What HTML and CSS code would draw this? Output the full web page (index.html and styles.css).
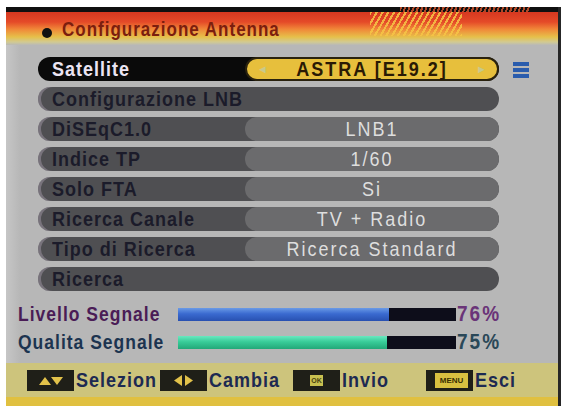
FILE: index.html
```html
<!DOCTYPE html>
<html lang="it">
<head>
<meta charset="utf-8">
<title>Configurazione Antenna</title>
<link rel="stylesheet" href="styles.css">
</head>
<body>
<div class="screen">
  <div class="header">
    <span class="bullet"></span><span class="title">Configurazione Antenna</span>
    <div class="hatch"></div>
    <div class="dash"></div>
  </div>

  <div class="menu">
    <div class="rows">
      <div class="row sel"><span class="label">Satellite</span><span class="value"><span class="arr">&#9668;</span><span class="t">ASTRA [E19.2]</span><span class="arr">&#9658;</span></span></div>
      <div class="row"><span class="label">Configurazione LNB</span></div>
      <div class="row"><span class="label">DiSEqC1.0</span><span class="value"><span class="t">LNB1</span></span></div>
      <div class="row"><span class="label">Indice TP</span><span class="value"><span class="t">1/60</span></span></div>
      <div class="row"><span class="label">Solo FTA</span><span class="value"><span class="t">Si</span></span></div>
      <div class="row"><span class="label">Ricerca Canale</span><span class="value"><span class="t">TV + Radio</span></span></div>
      <div class="row"><span class="label">Tipo di Ricerca</span><span class="value"><span class="t">Ricerca Standard</span></span></div>
      <div class="row"><span class="label">Ricerca</span></div>
    </div>
    <div class="list-icon">
      <svg width="16" height="16" viewBox="0 0 16 16"><rect x="0" y="0" width="16" height="4" fill="#2a5cad"/><rect x="0" y="6" width="16" height="4" fill="#2a5cad"/><rect x="0" y="12" width="16" height="4" fill="#2a5cad"/></svg>
    </div>
  </div>

  <div class="signals">
    <div class="sig">
      <span class="sig-label lv">Livello Segnale</span>
      <div class="bar"><div class="fill blue" style="width:76%"></div></div>
      <span class="pct lvp">76%</span>
    </div>
    <div class="sig">
      <span class="sig-label ql">Qualita Segnale</span>
      <div class="bar"><div class="fill green" style="width:75%"></div></div>
      <span class="pct qlp">75%</span>
    </div>
  </div>

  <div class="footer">
    <div class="key"><span class="kbox"><svg width="24" height="9" viewBox="0 0 24 9"><polygon points="0,9 6,1 12,9" fill="#e2c24a"/><polygon points="12,1 24,1 18,9" fill="#e2c24a"/></svg></span><span class="kt">Selezion</span></div>
    <div class="key"><span class="kbox"><svg width="19" height="11" viewBox="0 0 19 11"><polygon points="0,5.5 8,0 8,11" fill="#e2c24a"/><polygon points="11,0 19,5.5 11,11" fill="#e2c24a"/></svg></span><span class="kt">Cambia</span></div>
    <div class="key"><span class="kbox"><span class="ok">OK</span></span><span class="kt">Invio</span></div>
    <div class="key"><span class="kbox"><span class="mn">MENU</span></span><span class="kt">Esci</span></div>
  </div>
  <div class="bottom"></div>
</div>
</body>
</html>
```
FILE: styles.css
```css
* { box-sizing: border-box; }
html, body { margin: 0; padding: 0; background: #fff; }
body {
  width: 562px;
  height: 406px;
  overflow: hidden;
  font-family: "Liberation Sans", Arial, sans-serif;
}
.screen {
  margin: 7px 0 0 6px;
  width: 555px;
  height: 399px;
  border-right: 3px solid #262626;
  background: linear-gradient(to right, #c6c6c6 0, #b7b7b7 14px);
  display: flex;
  flex-direction: column;
  position: relative;
}
.header {
  position: relative;
  height: 38px;
  border-top: 5px solid #101010;
  background: linear-gradient(to bottom, #d63820 0px, #e54a28 10px, #f08638 17px, #e6c04a 25px, #d2ca92 30px, #b9b9b6 33px);
  display: flex;
  align-items: center;
  padding-left: 36px;
  padding-top: 2px;
}
.bullet {
  width: 10px;
  height: 10px;
  border-radius: 50%;
  background: #111;
  margin-right: 10px;
  margin-top: 6px;
}
.title {
  display: inline-block;
  font-weight: bold;
  font-size: 17px;
  letter-spacing: 1px;
  color: #7c1e0e;
  transform: scaleY(1.15);
}
.hatch {
  position: absolute;
  left: 364px;
  top: 0;
  width: 92px;
  height: 24px;
  background: repeating-linear-gradient(120deg, rgba(246, 196, 70, 0.85) 0 2px, transparent 2px 5px);
}
.dash {
  position: absolute;
  left: 394px;
  top: -5px;
  width: 130px;
  height: 5px;
  background: repeating-linear-gradient(110deg, #b04828 0 2px, transparent 2px 4px);
}
.menu {
  display: flex;
  align-items: flex-start;
  margin-top: 12px;
  padding-left: 32px;
}
.rows {
  width: 461px;
  display: flex;
  flex-direction: column;
  gap: 6px;
}
.row {
  height: 24px;
  border-radius: 12px;
  background: #4f4f52;
  display: flex;
  align-items: stretch;
  box-shadow: inset 3px 0 0 rgba(170, 160, 175, 0.45);
}
.label {
  display: block;
  width: 207px;
  padding-left: 14px;
  font-weight: bold;
  font-size: 18px;
  letter-spacing: 1px;
  color: #1b1b2a;
  line-height: 24px;
  white-space: nowrap;
  transform: scaleY(1.12);
  transform-origin: left center;
}
.value {
  flex: 1;
  border-radius: 12px;
  background: #6b6b6d;
  color: #dedede;
  font-size: 18px;
  letter-spacing: 2px;
  text-align: center;
  line-height: 24px;
  white-space: nowrap;
}
.t {
  display: inline-block;
  transform: scaleY(1.12);
}
.row.sel { background: #0a0a0a; box-shadow: none; }
.sel .label { color: #ebe4f2; }
.sel .value {
  background: #e7bf3c;
  border: 2px solid #2a220e;
  color: #2a1a04;
  font-weight: bold;
  letter-spacing: 2px;
  display: flex;
  justify-content: space-between;
  align-items: center;
  padding: 0 10px;
  line-height: 20px;
}
.arr { color: #c9c98a; font-size: 11px; letter-spacing: 0; }
.list-icon { margin-left: 14px; margin-top: 5px; line-height: 0; }
.signals { margin-top: 9px; padding-left: 12px; }
.sig { height: 28px; display: flex; align-items: center; }
.sig-label {
  display: block;
  width: 160px;
  font-weight: bold;
  font-size: 17.5px;
  letter-spacing: 1px;
  white-space: nowrap;
  transform: scaleY(1.12);
  transform-origin: left center;
}
.lv { color: #4a1c56; }
.ql { color: #1c3450; }
.bar { width: 278px; height: 13px; background: #0d0d1a; }
.fill { height: 100%; }
.blue { background: linear-gradient(to bottom, #6a9ae6 0, #3a6ad0 45%, #2850b0 100%); }
.green { background: linear-gradient(to bottom, #6ae8c0 0, #38cc98 45%, #22a878 100%); }
.pct {
  display: inline-block;
  font-weight: bold;
  font-size: 19px;
  letter-spacing: 2px;
  margin-left: 1px;
  transform: scaleY(1.12);
}
.lvp { color: #6a3478; }
.qlp { color: #2a4858; }
.footer {
  margin-top: auto;
  height: 34px;
  background: #cdc47c;
  display: grid;
  grid-template-columns: repeat(4, 133px);
  padding-left: 21px;
  align-items: center;
}
.key {
  display: flex;
  align-items: center;
  gap: 2px;
  font-weight: bold;
  font-size: 18px;
  letter-spacing: 1px;
  color: #1d2a52;
}
.kt {
  display: inline-block;
  transform: scaleY(1.12);
}
.kbox {
  width: 47px;
  height: 21px;
  background: #1f1f18;
  display: flex;
  align-items: center;
  justify-content: center;
  letter-spacing: 0;
}
.ok {
  width: 13px;
  height: 11px;
  background: #c8c050;
  color: #4a4410;
  font-size: 7px;
  line-height: 11px;
  text-align: center;
}
.mn {
  width: 33px;
  height: 15px;
  background: #d8c040;
  color: #3a3000;
  font-size: 8px;
  line-height: 15px;
  text-align: center;
  margin-left: 4px;
}
.bottom { height: 9px; background: #e0c040; }
```
